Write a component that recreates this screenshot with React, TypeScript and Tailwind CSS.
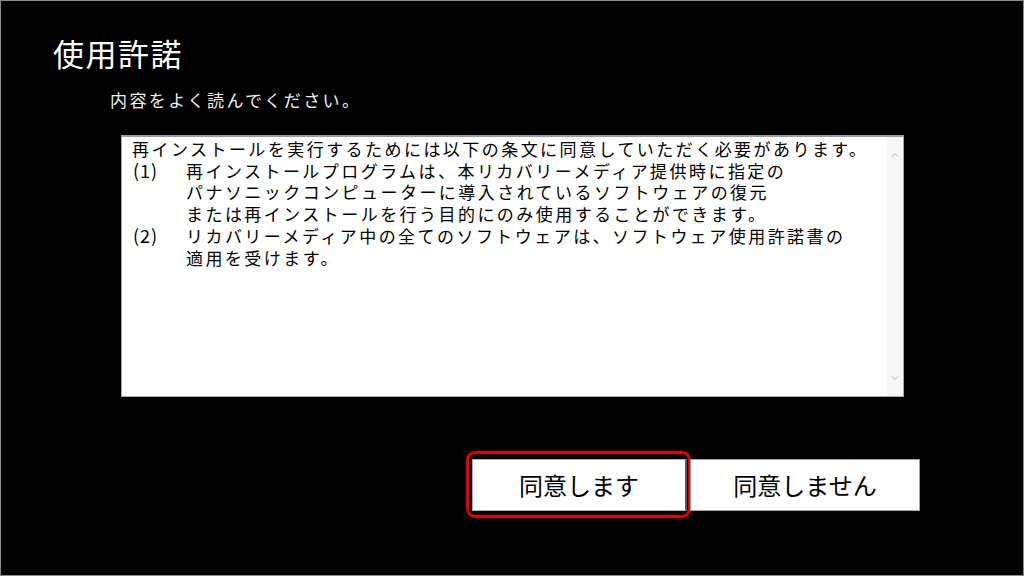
import { ChevronDown, ChevronUp } from 'lucide-react';

const jp = { fontFamily: '"Noto Sans CJK JP", "Noto Sans", sans-serif' };

const items = [
  {
    label: '(1)',
    lines: [
      '再インストールプログラムは、本リカバリーメディア提供時に指定の',
      'パナソニックコンピューターに導入されているソフトウェアの復元',
      'または再インストールを行う目的にのみ使用することができます。',
    ],
  },
  {
    label: '(2)',
    lines: ['リカバリーメディア中の全てのソフトウェアは、ソフトウェア使用許諾書の', '適用を受けます。'],
  },
];

export default function App() {
  return (
    <div
      className="w-[1024px] h-[576px] bg-black border border-[#8a8a8a] flex flex-col overflow-hidden"
      style={jp}
    >
      <h1 className="pl-[52px] pt-[37px] text-[31px] leading-[30px] tracking-[1.5px] text-white font-normal">
        使用許諾
      </h1>
      <p className="pl-[109px] mt-[22px] text-[17px] leading-[20px] text-[#f0f0f0] tracking-[2.4px]">
        内容をよく読んでください。
      </p>

      <div className="ml-[120px] mt-[25px] w-[783px] h-[262px] bg-white border border-[#a8a8a8] border-t-2 border-t-[#9a9a9a] flex">
        <div className="flex-1 pl-[10px] pt-[1px] text-[17px] leading-[21.7px] tracking-[2.45px] text-black">
          <div>再インストールを実行するためには以下の条文に同意していただく必要があります。</div>
          {items.map((it) => (
            <div key={it.label} className="flex">
              <span className="w-[54px] shrink-0 pl-[1px] text-[18px] tracking-[1px]">{it.label}</span>
              <div>
                {it.lines.map((l) => (
                  <div key={l}>{l}</div>
                ))}
              </div>
            </div>
          ))}
        </div>
        <div className="w-[16px] bg-[#f7f7f7] flex flex-col items-center justify-between py-[12px] text-[#b0b0b0]">
          <ChevronUp size={12} strokeWidth={2} />
          <ChevronDown size={12} strokeWidth={2} />
        </div>
      </div>

      <div className="flex items-center pl-[465px] mt-[54px]">
        <div className="border-[3px] border-[#e00000] rounded-[9px] pt-[5px] pb-[4px] pl-[3px] pr-[1px]">
          <button className="w-[215px] h-[52px] bg-white border border-[#b0b0b0] border-r-2 border-r-[#5a5a5a] text-[24px] text-black">
            同意します
          </button>
        </div>
        <button className="-ml-[1px] w-[230px] h-[52px] bg-white border border-[#a0a0a0] text-[24px] text-black">
          同意しません
        </button>
      </div>
    </div>
  );
}
